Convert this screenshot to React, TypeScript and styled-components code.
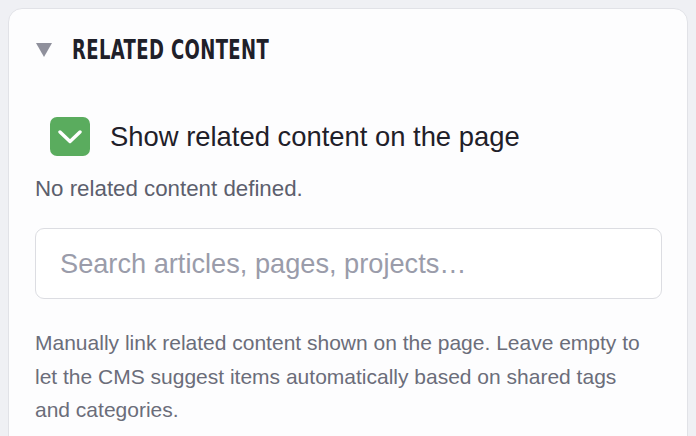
import React, { useState } from "react";
import styled, { createGlobalStyle } from "styled-components";

const GlobalStyle = createGlobalStyle`
  body {
    margin: 8px;
    background: #eff0f4;
    font-family: "Liberation Sans", Arial, sans-serif;
  }
`;

// Card wrapper for the section
const Card = styled.section`
  background: #fdfdfe;
  border: 1px solid #e1e2e7;
  border-radius: 14px;
  padding: 27px 25px 30px 26px;
  box-sizing: border-box;
`;

const Header = styled.div`
  display: flex;
  align-items: center;
  gap: 20px;
  height: 28px;
`;

const Caret = styled.span`
  width: 0;
  height: 0;
  border-left: 8px solid transparent;
  border-right: 8px solid transparent;
  border-top: 14px solid #8f909c;
  margin-left: 1px;
`;

const Title = styled.h2`
  margin: 0;
  font-family: "DejaVu Sans Condensed", "DejaVu Sans", sans-serif;
  font-weight: bold;
  font-size: 26px;
  letter-spacing: 0.5px;
  color: #1f2029;
  transform: scaleX(0.77);
  transform-origin: left center;
  white-space: nowrap;
`;

const CheckRow = styled.label`
  display: flex;
  align-items: center;
  gap: 20px;
  margin: 53px 0 0 15px;
  cursor: pointer;
`;

const CheckBox = styled.span<{ $checked: boolean }>`
  display: flex;
  align-items: center;
  justify-content: center;
  width: 40px;
  height: 39px;
  border-radius: 7px;
  background: ${(p) => (p.$checked ? "#5aac5e" : "#fff")};
`;

const CheckLabel = styled.span`
  font-size: 27.4px;
  line-height: 32px;
  color: #1f2029;
`;

const Empty = styled.p`
  margin: 21px 0 0;
  font-size: 22.3px;
  line-height: 24px;
  color: #5c5f6d;
`;

const SearchInput = styled.input`
  display: block;
  box-sizing: border-box;
  width: 100%;
  height: 71px;
  margin-top: 27px;
  padding: 0 24px;
  border: 1.5px solid #dcdde2;
  border-radius: 9px;
  background: #fff;
  font-family: "Liberation Sans", Arial, sans-serif;
  font-size: 27.2px;
  color: #1f2029;
  outline: none;

  &::placeholder {
    color: #9a9caa;
  }
`;

const Help = styled.p`
  margin: 27px 0 0;
  max-width: 614px;
  font-size: 21px;
  line-height: 33.5px;
  color: #6b6d7a;
`;

const App: React.FC = () => {
  const [checked, setChecked] = useState(true);

  return (<>
    <GlobalStyle />
    <Card>
      <Header>
        <Caret />
        <Title>RELATED CONTENT</Title>
      </Header>
      <CheckRow onClick={() => setChecked((prev) => !prev)}>
        <CheckBox $checked={checked}>
          {checked && (
            <svg width="24" height="14" viewBox="0 0 24 14" fill="none">
              <path d="M2 2 L12 11.5 L22 2" stroke="#fff" strokeWidth="3.4" strokeLinecap="round" strokeLinejoin="round" />
            </svg>
          )}
        </CheckBox>
        <CheckLabel>Show related content on the page</CheckLabel>
      </CheckRow>
      <Empty>No related content defined.</Empty>
      <SearchInput placeholder="Search articles, pages, projects…" />
      <Help>
        Manually link related content shown on the page. Leave empty to let the CMS suggest items automatically based on shared tags and categories.
      </Help>
    </Card>
  </>);
};

export default App;
